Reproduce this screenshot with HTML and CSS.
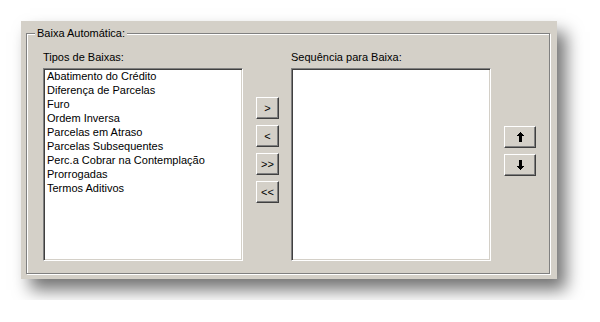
FILE: index.html
```html
<!DOCTYPE html>
<html lang="pt">
<head>
    <meta charset="UTF-8">
    <meta name="viewport" content="width=device-width, initial-scale=1.0">
    <title>Baixa Automática</title>
    <link rel="stylesheet" href="styles.css">
</head>
<body>
<div class="panel">
    <div class="group">
        <span class="legend">Baixa Automática:</span>
        <div class="column">
            <div class="label">Tipos de Baixas:</div>
            <ul class="listbox">
                <li>Abatimento do Crédito</li>
                <li>Diferença de Parcelas</li>
                <li>Furo</li>
                <li>Ordem Inversa</li>
                <li>Parcelas em Atraso</li>
                <li>Parcelas Subsequentes</li>
                <li>Perc.a Cobrar na Contemplação</li>
                <li>Prorrogadas</li>
                <li>Termos Aditivos</li>
            </ul>
        </div>
        <div class="move-buttons">
            <button class="btn">&gt;</button>
            <button class="btn">&lt;</button>
            <button class="btn">&gt;&gt;</button>
            <button class="btn">&lt;&lt;</button>
        </div>
        <div class="column">
            <div class="label">Sequência para Baixa:</div>
            <ul class="listbox"></ul>
        </div>
        <div class="order-buttons">
            <button class="btn btn-wide">
                <svg width="7" height="10" viewBox="0 0 7 10" shape-rendering="crispEdges"><path d="M3 0h1v1h1v1h1v1h1v1h-2v6h-3v-6h-2v-1h1v-1h1v-1h1z" fill="#000"/></svg>
            </button>
            <button class="btn btn-wide">
                <svg width="7" height="10" viewBox="0 0 7 10" shape-rendering="crispEdges"><path d="M3 0h1v1h1v1h1v1h1v1h-2v6h-3v-6h-2v-1h1v-1h1v-1h1z" fill="#000" transform="matrix(1 0 0 -1 0 10)"/></svg>
            </button>
        </div>
    </div>
</div>
</body>
</html>
```

FILE: styles.css
```css
body {
    margin: 0;
    padding: 21px;
    background: #fff;
    font-family: "Liberation Sans", Arial, sans-serif;
    font-size: 11px;
    color: #000;
}
.panel {
    width: 536px;
    height: 258px;
    box-sizing: border-box;
    padding: 12px 0 0 5px;
    background: #d4d0c8;
    box-shadow: 9px 11px 16px rgba(0, 0, 0, 0.55);
}
.group {
    position: relative;
    display: flex;
    align-items: flex-start;
    width: 524px;
    height: 241px;
    box-sizing: border-box;
    padding: 17px 0 0 16px;
    border: 1px solid #808080;
    box-shadow: 1px 1px 0 #fff, inset 1px 1px 0 #fff;
}
.legend {
    position: absolute;
    top: -7px;
    left: 8px;
    padding: 0 2px;
    line-height: 13px;
    background: #d4d0c8;
}
.label {
    line-height: 13px;
    margin-bottom: 4px;
}
.listbox {
    width: 200px;
    height: 193px;
    box-sizing: border-box;
    margin: 0;
    padding: 0 2px;
    list-style: none;
    background: #fff;
    border: 1px solid;
    border-color: #808080 #fff #fff #808080;
    box-shadow: inset 1px 1px 0 #404040, inset -1px -1px 0 #d4d0c8;
}
.listbox li {
    line-height: 14px;
    padding-left: 1px;
    white-space: nowrap;
}
.move-buttons,
.order-buttons {
    display: flex;
    flex-direction: column;
    gap: 6px;
}
.move-buttons {
    margin: 46px 12px 0 13px;
}
.order-buttons {
    margin: 75px 0 0 13px;
}
.btn {
    display: flex;
    align-items: center;
    justify-content: center;
    width: 23px;
    height: 22px;
    padding: 0;
    background: #d4d0c8;
    font-family: "Liberation Sans", Arial, sans-serif;
    font-size: 11px;
    color: #000;
    border: 1px solid;
    border-color: #fff #404040 #404040 #fff;
    box-shadow: inset -1px -1px 0 #808080;
}
.btn-wide {
    width: 32px;
}
```
